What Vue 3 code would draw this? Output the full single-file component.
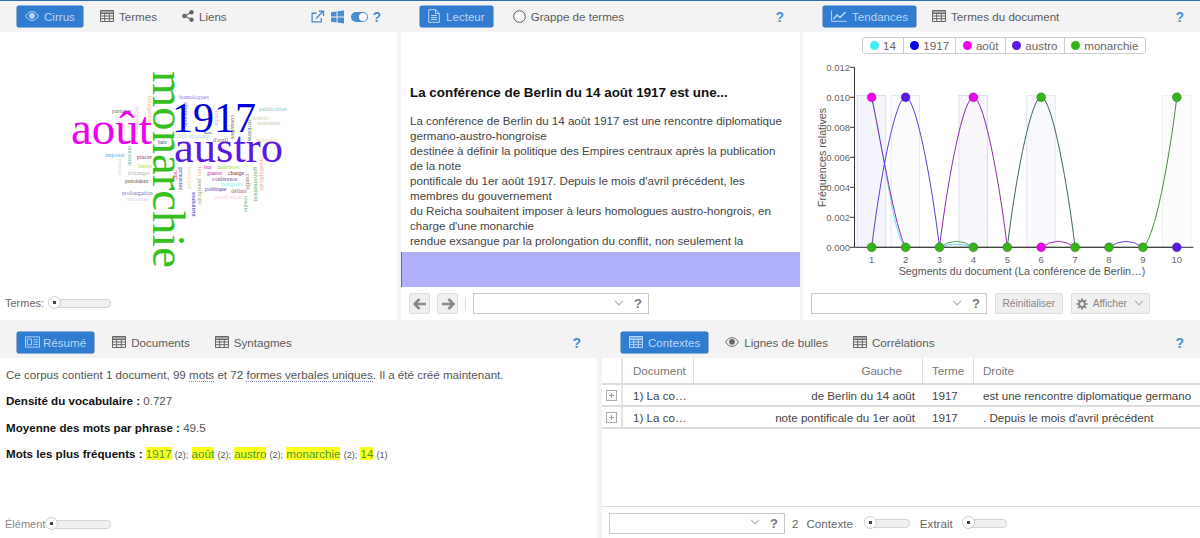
<script setup>
const toolbars = {
  cirrus: [{ t: 'Cirrus', i: 'eye', on: true }, { t: 'Termes', i: 'table' }, { t: 'Liens', i: 'share' }],
  reader: [{ t: 'Lecteur', i: 'doc', on: true }, { t: 'Grappe de termes', i: 'radio' }],
  trends: [{ t: 'Tendances', i: 'chart', on: true }, { t: 'Termes du document', i: 'table' }],
  summary: [{ t: 'Résumé', i: 'card', on: true }, { t: 'Documents', i: 'table' }, { t: 'Syntagmes', i: 'table' }],
  contexts: [{ t: 'Contextes', i: 'table', on: true }, { t: 'Lignes de bulles', i: 'eye' }, { t: 'Corrélations', i: 'table' }]
}

const bigWords = [
  { t: 'août', x: 71, y: 144, s: 47, c: '#f000f0' },
  { t: '1917', x: 172, y: 131.5, s: 42, c: '#0000e0' },
  { t: 'austro', x: 174, y: 162, s: 44.6, c: '#5a18e8' },
  { t: 'monarchie', x: 153, y: 71, s: 46.7, c: '#35c020', r: 1 }
]
const smallWords = [
  ['homologues', 179, 98.5, 6.1, '#a07cf0'], ['partager', 112, 113, 6, '#3e6f55'],
  ['publication', 259, 111, 6.2, '#90c8c8'], ['double', 252, 120, 6, '#d0d0b8'],
  ['seulement', 257, 125, 5.8, '#d8c8b0'], ['diplomatique', 177, 138, 6.2, '#c4d8e4'],
  ["d'avril", 213, 142, 6, '#806878'], ['note', 204, 134, 5, '#404888'],
  ['buts', 158, 144, 5.2, '#304878'], ['imposer', 105, 157, 6.2, '#58b0f0'],
  ['placer', 137, 159, 6.2, '#903070'], ['limite', 138, 168, 6, '#b0e060'],
  ['échanger', 128, 175, 6, '#b8b0a8'], ['précédent', 125, 183, 6, '#705038'],
  ['prolongation', 122, 195, 6, '#8078b0'], ['rencontre', 126, 201, 5.8, '#d0d4e8'],
  ['but', 204, 169, 6, '#e020c0'], ['membres', 217, 169, 6, '#a0e050'],
  ['guerre', 207, 174.5, 5.8, '#c020b0'], ['charge', 228, 175, 6, '#702040'],
  ['conférence', 212, 181, 5.8, '#7050a0'], ['hongrois', 221, 186, 6.2, '#80f0f0'],
  ['politique', 205, 191, 6, '#5838a0'], ['définir', 231, 193, 6, '#a86070'],
  ['publication', 214, 199, 6.2, '#f8d0e0'], ['militaire', 257, 142, 6, '#e8d890']
]
const rotatedWords = [
  ['bourgeoise', 148, 96, 6, '#f0b870'], ['dépendance', 135, 106, 6, '#d8c8e8'],
  ['allemande', 184, 102, 6, '#6878d0'], ['reicha', 215, 111, 6, '#c8b0d8'],
  ['conquêtes', 231, 115, 6, '#806850'], ['territoires', 248, 120, 5.4, '#406050'],
  ['doctrine', 128, 146, 6, '#60b0a0'], ['rendue', 118, 159, 6, '#d8d8d0'],
  ['germaniste', 179, 167, 5.2, '#3040a0'], ['reich', 174, 170, 5.4, '#e02060'],
  ['exsangue', 188, 167, 6, '#f0d8b0'], ['lien', 198, 167, 6, '#f0b060'],
  ['pontificale', 198, 179, 6, '#a0a070'], ['souhaitent', 192, 192, 6, '#3030d0'],
  ['gouvernement', 254, 167, 6, '#60b060'], ['quadruplicale', 260, 158, 6, '#e0a890'],
  ['conflit', 246, 174, 6, '#808040'], ['résulte', 244, 196, 6, '#70c070']
]

const yTicks = [0, 2, 4, 6, 8, 10, 12].map((v) => ({ y: 248.3 - v * 15, label: (v / 1000).toFixed(3) }))
const X = (n) => 871.7 + (n - 1) * 33.9
const xTicks = [1, 2, 3, 4, 5, 6, 7, 8, 9, 10].map((n) => ({ n, x: X(n) }))
const bars = [
  { n: 1, fill: '#f3f4fc', stroke: '#dcdcf0' },
  { n: 2, fill: '#fcfcff', stroke: '#e6e6f8' },
  { n: 4, fill: '#f9f6fc', stroke: '#e0dcf0' },
  { n: 6, fill: '#f9f9fd', stroke: '#e6e6f4' },
  { n: 10, fill: '#fcfcfc', stroke: '#efefef' }
]
const T = 98.3
const B = 248.3
const s = 33.9
const rise = (n) => `C${X(n) + s * 0.25} ${B - 70} ${X(n + 1) - s * 0.3} ${T} ${X(n + 1)} ${T}`
const fall = (n) => `C${X(n) + s * 0.3} ${T} ${X(n + 1) - s * 0.25} ${B - 70} ${X(n + 1)} ${B}`
const peak = (n) => `M${X(n - 1)} ${B}${rise(n - 1)}${fall(n)}`
const lines = [
  { d: `M${X(1)} ${T}C${X(1) + s * 0.4} ${T + 60} ${X(2) - s * 0.35} ${B - 8} ${X(2)} ${B}`, c: '#70e0f0' },
  { d: `M${X(1)} ${T}C${X(1) + s * 0.3} ${T + 50} ${X(2) - s * 0.3} ${B - 18} ${X(2)} ${B}`, c: '#8a2aa8' },
  { d: peak(2), c: '#5a3fd0' },
  { d: peak(4), c: '#8a2aa8' },
  { d: peak(6), c: '#37684f' },
  { d: `M${X(9)} ${B}C${X(9) + s * 0.35} ${B - 8} ${X(10) - s * 0.22} ${T + 62} ${X(10)} ${T}`, c: '#4a8a40' },
  { d: `M${X(3)} ${B}Q${(X(3) + X(4)) / 2} ${B - 12} ${X(4)} ${B}`, c: '#50a070' },
  { d: `M${X(3)} ${B}Q${(X(3) + X(4)) / 2} ${B - 6} ${X(4)} ${B}`, c: '#70d0f0' },
  { d: `M${X(6)} ${B}Q${(X(6) + X(7)) / 2} ${B - 12} ${X(7)} ${B}`, c: '#a030a8' },
  { d: `M${X(8)} ${B}Q${(X(8) + X(9)) / 2} ${B - 12} ${X(9)} ${B}`, c: '#6a40d8' },
  { d: `M${X(1)} ${B}L${X(10)} ${B}`, c: '#556b50' }
]
const dots = [
  [1, B, '#33b518'], [2, B, '#33b518'], [3, B, '#33b518'], [4, B, '#33b518'], [5, B, '#33b518'],
  [6, B, '#f000f0'], [7, B, '#33b518'], [8, B, '#33b518'], [9, B, '#33b518'], [10, B, '#5a18e8'],
  [1, T, '#f000f0'], [2, T, '#5a18e8'], [4, T, '#f000f0'], [6, T, '#33b518'], [10, T, '#33b518']
].map(([n, y, c]) => ({ x: X(n), y, c }))
const legend = [
  { t: '14', c: '#40f0f0' }, { t: '1917', c: '#0000e8' }, { t: 'août', c: '#f000f0' },
  { t: 'austro', c: '#5a18e8' }, { t: 'monarchie', c: '#33b518' }
]
const readerLines = [
  'La conférence de Berlin du 14 août 1917 est une rencontre diplomatique germano-austro-hongroise',
  'destinée à définir la politique des Empires centraux après la publication de la note',
  "pontificale du 1er août 1917. Depuis le mois d'avril précédent, les membres du gouvernement",
  "du Reicha souhaitent imposer à leurs homologues austro-hongrois, en charge d'une monarchie",
  'rendue exsangue par la prolongation du conflit, non seulement la'
]
const frequent = [
  { w: '1917', n: '(2);' }, { w: 'août', n: '(2);' }, { w: 'austro', n: '(2);' },
  { w: 'monarchie', n: '(2);' }, { w: '14', n: '(1)' }
]
const rows = [
  { left: 'de Berlin du 14 août', right: 'est une rencontre diplomatique germano' },
  { left: 'note pontificale du 1er août', right: ". Depuis le mois d'avril précédent" }
]
</script>

<template>
  <div class="page">
    <svg class="sprite" aria-hidden="true">
      <symbol id="i-table" viewBox="0 0 14 12">
        <path d="M.5.5h13v11H.5zM.5 3.5h13M.5 6h13M.5 8.700h13M4.700 3.500v8M9.300 3.500v8" fill="none" stroke="currentColor" stroke-width="1" />
        <path d="M.5.5h13v3H.5z" fill="currentColor" opacity=".55" />
      </symbol>
      <symbol id="i-eye" viewBox="0 0 16 12">
        <path d="M.6 6C3 2.400 5.400 1 8 1s5 1.400 7.400 5C13 9.600 10.600 11 8 11S3 9.600.6 6z" fill="none" stroke="currentColor" stroke-width="1.100" />
        <circle cx="8" cy="5.800" r="3.300" fill="currentColor" />
      </symbol>
      <symbol id="i-share" viewBox="0 0 12 12">
        <path d="M9.500 2.500 2.500 6l7 3.500" fill="none" stroke="currentColor" stroke-width="1.200" />
        <circle cx="9.500" cy="2.300" r="2.200" fill="currentColor" />
        <circle cx="2.400" cy="6" r="2.200" fill="currentColor" />
        <circle cx="9.500" cy="9.700" r="2.200" fill="currentColor" />
      </symbol>
      <symbol id="i-doc" viewBox="0 0 12 14">
        <path d="M.7.7h7l3.600 3.600v9H.7zM7.500.7v3.800h3.800M3 6.500h6M3 8.500h6M3 10.500h6" fill="none" stroke="currentColor" stroke-width="1" />
      </symbol>
      <symbol id="i-radio" viewBox="0 0 13 13">
        <circle cx="6.500" cy="6.500" r="5.800" fill="#fff" stroke="#555" stroke-width="1" />
      </symbol>
      <symbol id="i-chart" viewBox="0 0 16 12">
        <path d="M.6.500v10.800h15" fill="none" stroke="currentColor" stroke-width="1" />
        <path d="m2.500 9 3.500-4 3 2.500L14.500 2" fill="none" stroke="currentColor" stroke-width="1.500" />
      </symbol>
      <symbol id="i-card" viewBox="0 0 16 12">
        <path d="M.5.500h15v11H.5z" fill="none" stroke="currentColor" stroke-width="1" />
        <path d="M2.500 3h4.500v6H2.500zM9 3.500h5M9 6h5M9 8.500h5" fill="none" stroke="currentColor" stroke-width="1" />
      </symbol>
      <symbol id="i-gear" viewBox="0 0 14 14">
        <circle cx="7" cy="7" r="3.500" fill="none" stroke="currentColor" stroke-width="2.400" />
        <path d="M7 .3v3M7 10.700v3M.3 7h3M10.700 7h3M2.300 2.300l2 2M9.700 9.700l2 2M2.300 11.700l2-2M9.700 4.300l2-2" stroke="currentColor" stroke-width="2" />
      </symbol>
    </svg>

    <div class="row-top">
      <section class="panel p-cirrus">
        <header class="bar first">
          <button v-for="b in toolbars.cirrus" :key="b.t" class="tab" :class="{ on: b.on }">
            <svg class="tab-ic" :class="'ic-' + b.i"><use :href="'#i-' + b.i" /></svg>{{ b.t }}
          </button>
          <div class="tools">
            <svg class="tool t-ext" width="14" height="14" viewBox="0 0 15 14">
              <path d="M11 8v4.300H1.200V3H6" fill="none" stroke="#4a8cd0" stroke-width="1.400" />
              <path d="m5.500 8.500 7-7M8.500.9h4.900v4.900" fill="none" stroke="#4a8cd0" stroke-width="1.500" />
            </svg>
            <svg class="tool t-win" width="13" height="14" viewBox="0 0 14 14">
              <path d="M0 2 6 1v5.500H0zM7 .8 14 0v6.500H7zM0 7.500h6V13l-6-1zM7 7.500h7V14l-7-1z" fill="#4a8cd0" />
            </svg>
            <span class="toggle"><i></i></span>
            <span class="help">?</span>
          </div>
        </header>
        <div class="body cloud">
          <svg class="cloud-svg" viewBox="0 32 397 260" width="397" height="260">
            <g v-for="w in smallWords" :key="w[0] + w[1]">
              <text :x="w[1]" :y="w[2]" :font-size="w[3]" :fill="w[4]">{{ w[0] }}</text>
            </g>
            <g v-for="w in rotatedWords" :key="w[0] + w[1]">
              <text :transform="`translate(${w[1]} ${w[2]}) rotate(90)`" :font-size="w[3]" :fill="w[4]">{{ w[0] }}</text>
            </g>
            <g v-for="w in bigWords" :key="w.t">
              <text v-if="w.r" :transform="`translate(${w.x} ${w.y}) rotate(90)`" :font-size="w.s" :fill="w.c">{{ w.t }}</text>
              <text v-else :x="w.x" :y="w.y" :font-size="w.s" :fill="w.c">{{ w.t }}</text>
            </g>
          </svg>
          <div class="slider-line">
            <span class="lbl">Termes:</span>
            <span class="slider s-terms"><i></i></span>
          </div>
        </div>
      </section>

      <section class="panel p-reader">
        <header class="bar">
          <button v-for="b in toolbars.reader" :key="b.t" class="tab" :class="{ on: b.on }">
            <svg class="tab-ic" :class="'ic-' + b.i"><use :href="'#i-' + b.i" /></svg>{{ b.t }}
          </button>
          <div class="tools"><span class="help">?</span></div>
        </header>
        <div class="body reader">
          <h2>La conférence de Berlin du 14 août 1917 est une...</h2>
          <p><template v-for="l in readerLines" :key="l">{{ l }}<br /></template></p>
        </div>
        <div class="band"></div>
        <footer class="foot ft">
          <button class="arrow"><svg width="14" height="12" viewBox="0 0 14 12"><path d="M6.500 1 1.500 6l5 5M2 6h11" fill="none" stroke="#8a8a8a" stroke-width="2.600" /></svg></button>
          <button class="arrow"><svg width="14" height="12" viewBox="0 0 14 12"><path d="m7.500 1 5 5-5 5M12 6H1" fill="none" stroke="#8a8a8a" stroke-width="2.600" /></svg></button>
          <span class="sep"></span>
          <div class="combo w176"><span class="chev"></span><b>?</b></div>
        </footer>
      </section>

      <section class="panel p-trends">
        <header class="bar b-trends">
          <button v-for="b in toolbars.trends" :key="b.t" class="tab" :class="{ on: b.on }">
            <svg class="tab-ic" :class="'ic-' + b.i"><use :href="'#i-' + b.i" /></svg>{{ b.t }}
          </button>
          <div class="tools"><span class="help">?</span></div>
        </header>
        <div class="body trends">
          <div class="legend">
            <span v-for="l in legend" :key="l.t" class="leg"><i :style="{ background: l.c }"></i>{{ l.t }}</span>
          </div>
          <svg class="chart" viewBox="803 55 397 232" width="397" height="232">
            <rect v-for="b in bars" :key="b.n" :x="X(b.n) - 14.5" y="96.5" width="28.5" :height="B - 96.5" :fill="b.fill" :stroke="b.stroke" />
            <path v-for="(l, i) in lines" :key="i" :d="l.d" fill="none" :stroke="l.c" stroke-width="1" />
            <path :d="`M854.5 68.3V${B}H1193.5`" fill="none" stroke="#333" stroke-width="1" />
            <g v-for="t in yTicks" :key="t.label">
              <path :d="`M850 ${t.y}H854.5`" stroke="#333" />
              <text x="850" :y="t.y + 3.5" text-anchor="end" class="tick">{{ t.label }}</text>
            </g>
            <g v-for="t in xTicks" :key="t.n">
              <path :d="`M${t.x} ${B}v4`" stroke="#555" />
              <text :x="t.x" y="264" text-anchor="middle" class="tick">{{ t.n }}</text>
            </g>
            <circle v-for="(d, i) in dots" :key="i" :cx="d.x" :cy="d.y" r="4.5" :fill="d.c" stroke="#555" stroke-opacity=".55" stroke-width=".7" />
            <text class="axis" x="1022" y="276" text-anchor="middle">Segments du document (La conférence de Berlin…)</text>
            <text class="axis" transform="translate(826 158.5) rotate(-90)" text-anchor="middle">Fréquences relatives</text>
          </svg>
        </div>
        <footer class="foot ft">
          <div class="combo w176 m1"><span class="chev"></span><b>?</b></div>
          <button class="grey b-reset">Réinitialiser</button>
          <button class="grey b-show"><svg width="12" height="12"><use href="#i-gear" /></svg>Afficher<span class="chev c2"></span></button>
        </footer>
      </section>
    </div>

    <div class="row-bottom">
      <section class="panel p-summary">
        <header class="bar tall first">
          <button v-for="b in toolbars.summary" :key="b.t" class="tab" :class="{ on: b.on }">
            <svg class="tab-ic" :class="'ic-' + b.i"><use :href="'#i-' + b.i" /></svg>{{ b.t }}
          </button>
          <div class="tools"><span class="help">?</span></div>
        </header>
        <div class="body summary">
          <p>Ce corpus contient 1 document, 99 <span class="dot">mots</span> et 72 <span class="dot">formes verbales uniques</span>. Il a été créé maintenant.</p>
          <p><strong>Densité du vocabulaire :</strong> 0.727</p>
          <p><strong>Moyenne des mots par phrase :</strong> 49.5</p>
          <p><strong>Mots les plus fréquents :</strong>
            <template v-for="f in frequent" :key="f.w">{{ ' ' }}<mark>{{ f.w }}</mark> <small>{{ f.n }}</small></template>
          </p>
          <div class="slider-line el">
            <span class="lbl">Élément</span>
            <span class="slider s-el"><i></i></span>
          </div>
        </div>
      </section>

      <section class="panel p-contexts">
        <header class="bar tall">
          <button v-for="b in toolbars.contexts" :key="b.t" class="tab" :class="{ on: b.on }">
            <svg class="tab-ic" :class="'ic-' + b.i"><use :href="'#i-' + b.i" /></svg>{{ b.t }}
          </button>
          <div class="tools"><span class="help">?</span></div>
        </header>
        <div class="body table">
          <div class="tr th">
            <span class="c0"></span><span class="c1">Document</span><span class="c2c">Gauche</span><span class="c3">Terme</span><span class="c4">Droite</span>
          </div>
          <div v-for="r in rows" :key="r.left" class="tr td">
            <span class="c0"><i class="plus"></i></span><span class="c1">1) La co…</span><span class="c2c">{{ r.left }}</span><span class="c3">1917</span><span class="c4">{{ r.right }}</span>
          </div>
        </div>
        <footer class="foot f-ctx">
          <div class="combo w176"><span class="chev"></span><b>?</b></div>
          <span class="ctx n">2</span>
          <span class="ctx l1">Contexte</span>
          <span class="slider s-c1"><i></i></span>
          <span class="ctx l2">Extrait</span>
          <span class="slider s-c2"><i></i></span>
        </footer>
      </section>
    </div>
  </div>
</template>

<style>
html, body { margin: 0; background: #f3f3f3; }
</style>

<style scoped>
.page {
  width: 1200px;
  height: 538px;
  overflow: hidden;
  box-sizing: border-box;
  border-top: 1px solid #2f6ea8;
  background: #f3f3f3;
  font-family: "Liberation Sans", Arial, sans-serif;
  color: #555;
  font-size: 11.6px;
}
.sprite { position: absolute; width: 0; height: 0; }
.row-top { display: flex; height: 319px; }
.row-bottom { display: flex; height: 218px; justify-content: space-between; }
.panel { display: flex; flex-direction: column; min-width: 0; background: #fff; }
.p-cirrus { width: 397px; margin-right: 4px; }
.p-reader { width: 399px; margin-right: 3px; }
.p-trends { width: 397px; }
.p-summary { width: 597px; }
.p-contexts { width: 598px; }

.bar {
  flex: none;
  height: 31px;
  box-sizing: border-box;
  display: flex;
  align-items: flex-start;
  gap: 9px;
  padding: 5px 0 0 19px;
  background: #f3f3f3;
}
.bar.first { padding-left: 17px; }
.bar.b-trends { padding-left: 20px; gap: 8px; }
.bar.tall { height: 38px; padding-top: 12px; }
.tab {
  display: flex;
  align-items: center;
  gap: 5px;
  height: 21px;
  padding: 0 8px 1px;
  border: 0;
  border-radius: 2px;
  background: transparent;
  color: #5c5c5c;
  font: 11.6px "Liberation Sans", Arial, sans-serif;
}
.tab.on { background: #2f7cd0; color: #b9d6f6; box-shadow: 0 0 0 .5px #2a6fb8; }
.p-reader .tab.on { gap: 6px; margin-right: 3px; }
.p-summary .tab.on { margin-right: 1px; }
.tab-ic { width: 14px; height: 12px; flex: none; color: #666; }
.tab.on .tab-ic { color: #b9d6f6; }
.ic-eye { width: 14px; }
.ic-share { width: 12px; }
.ic-doc { height: 14px; width: 12px; }
.ic-radio { width: 13px; height: 13px; }
.ic-chart { width: 16px; }
.ic-card { width: 15px; margin-right: -2px; }
.tools { margin-left: auto; display: flex; align-items: center; gap: 4px; height: 21px; padding-right: 16px; }
.t-win { margin-left: 2px; }
.toggle { display: block; width: 17px; height: 10px; border-radius: 5px; background: #4a8cd0; position: relative; margin-left: 3px; }
.help { color: #4a8cd0; font-weight: 700; font-size: 14px; }
.toggle i { position: absolute; right: 1px; top: 1px; width: 8px; height: 8px; border-radius: 50%; background: #fff; }

.body { flex: 1; min-height: 0; position: relative; }
.cloud { display: flex; flex-direction: column; }
.cloud-svg { display: block; flex: none; font-family: "Liberation Serif", "Times New Roman", serif; }
.slider-line { display: flex; align-items: center; padding-left: 5px; height: 22px; color: #666; font-size: 11px; }
.slider { display: block; position: relative; height: 7px; border: 1px solid #d4d4d4; border-radius: 4px; background: #f0f0f0; }
.slider i {
  position: absolute; left: -3px; top: -4px; width: 13px; height: 13px; box-sizing: border-box;
  border: 1px solid #ccc; border-radius: 50%; background: radial-gradient(circle, #444 0 1.5px, #fff 2px);
}
.s-terms { width: 59px; margin-left: 6px; }
.s-el { width: 62px; margin-left: 2px; }

.reader { padding: 0 9px; overflow: hidden; }
.reader h2 { margin: 53px 0 12px; font-size: 13.4px; line-height: 16px; color: #111; }
.reader p { margin: 0; font-size: 11.6px; line-height: 15px; color: #444; }
.band { flex: none; height: 35px; background: #b0b0fc; border-left: 1px solid #4a6db8; }
.foot { flex: none; height: 32px; display: flex; align-items: center; padding-left: 8px; background: #fff; }
.foot.ft { height: 33px; }
.arrow { width: 21px; height: 21px; padding: 0; margin-right: 7px; display: flex; align-items: center; justify-content: center; border: 1px solid #ddd; border-radius: 2px; background: #f0f0f0; }
.sep { width: 1px; height: 14px; background: #ddd; margin: 0 7px 0 0; }
.combo { height: 21px; box-sizing: border-box; border: 1px solid #c8c8c8; position: relative; display: flex; align-items: center; justify-content: flex-end; padding-right: 6px; background: #fff; }
.combo b { color: #777; font-size: 13px; margin-left: 12px; }
.w176 { width: 176px; }
.chev { display: block; width: 5px; height: 5px; border-right: 1px solid #aaa; border-bottom: 1px solid #aaa; transform: rotate(45deg) translate(-2px, -2px); }
.m1 { margin-right: 8px; }
.grey { height: 21px; border: 1px solid #ddd; border-radius: 2px; background: #f0f0f0; color: #888; font: 10.2px "Liberation Sans", Arial, sans-serif; padding: 0 6.5px; }
.b-show { display: flex; align-items: center; gap: 5px; margin-left: 8px; padding: 0 7px 0 4px; color: #888; }
.c2 { margin-left: 4px; }

.legend { display: inline-flex; height: 17px; margin: 5px 0 0 59px; border: 1px solid #ccc; border-radius: 3px; box-sizing: border-box; font-size: 11.6px; color: #666; vertical-align: top; }
.leg { display: flex; align-items: center; gap: 4px; padding: 0 6.4px; border-left: 1px solid #ccc; }
.leg:first-child { border-left: 0; padding: 0 7px; }
.leg i { display: block; width: 9px; height: 9px; border-radius: 50%; }
.chart { display: block; font-family: "Liberation Sans", Arial, sans-serif; }
.tick { font-size: 9.5px; fill: #666; }
.axis { font-size: 10.7px; fill: #555; }

.summary { padding: 0 6px; font-size: 11.6px; color: #555; }
.summary p { margin: 0 0 11.5px; line-height: 15px; }
.summary p:first-child { padding-top: 9px; margin-bottom: 11px; }
.summary strong { color: #111; }
.dot { border-bottom: 1px dotted #8888c8; }
mark { background: #ffff20; color: #4a9a30; }
small { font-size: 9px; }
.el { position: absolute; left: 0; bottom: 3px; padding-left: 5px; color: #888; }

.table { display: flex; flex-direction: column; font-size: 11.6px; }
.tr { display: flex; align-items: center; box-sizing: border-box; }
.tr > span { box-sizing: border-box; white-space: nowrap; overflow: hidden; }
.th { height: 27px; border-bottom: 2px solid #ddd; color: #777; }
.td { height: 22px; border-bottom: 2px solid #ddd; color: #444; }
.tr .c0 { width: 21px; height: 100%; border-right: 2px solid #e4e4e4; display: flex; align-items: center; justify-content: center; }
.tr .c1 { width: 71px; padding-left: 10px; }
.tr .c2c { width: 229px; text-align: right; padding-right: 8px; }
.tr .c3 { width: 51px; padding-left: 9px; }
.tr .c4 { flex: 1; padding-left: 9px; }
.th .c1, .th .c2c, .th .c3 { height: 100%; display: flex; align-items: center; border-right: 1px solid #ddd; }
.th .c2c { justify-content: flex-end; padding-right: 20px; }
.td .c1, .td .c2c, .td .c3, .td .c4 { padding-top: 1px; }
.plus { display: block; width: 9px; height: 9px; border: 1px solid #aaa; background: linear-gradient(#999,#999) center/5px 1px no-repeat, linear-gradient(#999,#999) center/1px 5px no-repeat; }
.f-ctx { height: 32px; margin-top: auto; border-top: 1px solid #ddd; padding-left: 7px; padding-top: 1px; box-sizing: border-box; }
.ctx { color: #666; font-size: 11.6px; }
.n { margin-left: 7px; }
.l1 { margin-left: 8px; }
.s-c1 { width: 42px; margin-left: 13px; }
.l2 { margin-left: 10px; }
.s-c2 { width: 41px; margin-left: 11px; }
</style>
